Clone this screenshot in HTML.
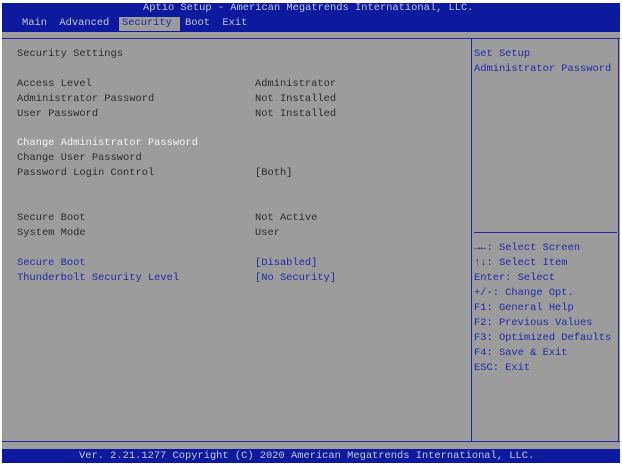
<!DOCTYPE html>
<html><head><style>
body{margin:0;width:622px;height:466px;background:#fff;overflow:hidden;position:relative;font-family:"Liberation Mono",monospace;font-size:10.4px;}
div{position:absolute;white-space:pre;line-height:15px;}
.g{color:#2c2c2c}.w{color:#f4f4f4}.b{color:#1d2aa8}.h{color:#c8c8d8}
</style></head><body>
<div style="left:2px;top:3px;width:618px;height:29px;background:#0d1a9e"></div>
<div style="left:2px;top:32px;width:618px;height:417px;background:#9c9c9c"></div>
<div style="left:2px;top:38px;width:618px;height:1px;background:#1e2aa0"></div>
<div style="left:2px;top:441px;width:618px;height:1px;background:#1e2aa0"></div>
<div style="left:471px;top:38px;width:1px;height:403px;background:#1e2aa0"></div>
<div style="left:618px;top:38px;width:1px;height:403px;background:#1e2aa0"></div>
<div style="left:474px;top:232px;width:143px;height:1px;background:#1e2aa0"></div>
<div style="left:2px;top:449px;width:618px;height:14px;background:#0d1a9e"></div>
<div class="h" style="left:143px;top:1px">Aptio Setup - American Megatrends International, LLC.</div>
<div class="h" style="left:22px;top:16px">Main  Advanced</div>
<div style="left:119px;top:17px;width:61px;height:14px;background:#9c9c9c"></div>
<div class="b" style="left:122px;top:16px">Security</div>
<div class="h" style="left:185px;top:16px">Boot  Exit</div>
<div class="g" style="left:17px;top:47px">Security Settings</div>
<div class="g" style="left:17px;top:77px">Access Level
Administrator Password
User Password</div>
<div class="g" style="left:255px;top:77px">Administrator
Not Installed
Not Installed</div>
<div class="w" style="left:17px;top:136px">Change Administrator Password</div>
<div class="g" style="left:17px;top:151px">Change User Password
Password Login Control</div>
<div class="g" style="left:255px;top:166px">[Both]</div>
<div class="g" style="left:17px;top:211px">Secure Boot
System Mode</div>
<div class="g" style="left:255px;top:211px">Not Active
User</div>
<div class="b" style="left:17px;top:256px">Secure Boot
Thunderbolt Security Level</div>
<div class="b" style="left:255px;top:256px">[Disabled]
[No Security]</div>
<div class="b" style="left:474px;top:47px">Set Setup
Administrator Password</div>
<div class="b" style="left:474px;top:241px">→←: Select Screen
↑↓: Select Item
Enter: Select
+/-: Change Opt.
F1: General Help
F2: Previous Values
F3: Optimized Defaults
F4: Save &amp; Exit
ESC: Exit</div>
<div class="h" style="left:79px;top:449px;line-height:14px">Ver. 2.21.1277 Copyright (C) 2020 American Megatrends International, LLC.</div>
</body></html>
